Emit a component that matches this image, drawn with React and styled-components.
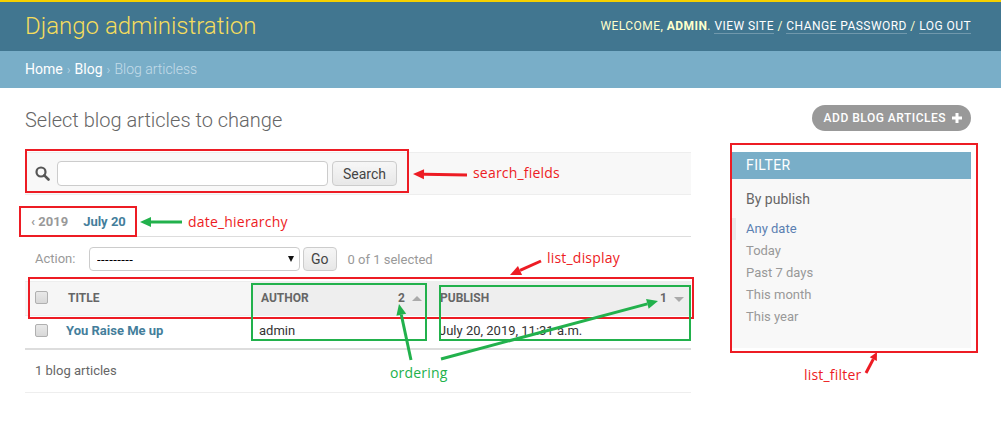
import React from "react";
import styled, { createGlobalStyle } from "styled-components";

const Global = createGlobalStyle`
  html, body { margin: 0; padding: 0; background: #fff; }
  body { font-family: Roboto, "Lucida Grande", Verdana, Arial, sans-serif; font-size: 14px; color: #333; width: 1001px; height: 427px; overflow: hidden; }
  * { box-sizing: border-box; }
`;

const Page = styled.div`position: relative; width: 1001px; height: 427px; overflow: hidden;`;

const Header = styled.header`
  height: 51px; background: #417690; border-top: 2px solid #f5d000;
  padding: 0 30px 0 25px; display: flex; align-items: center; justify-content: space-between; color: #ffc;
`;
const Brand = styled.h1`margin: 0; font-size: 24px; font-weight: 300; color: #f5dd5d; line-height: 1.2;`;
const Tools = styled.div`font-size: 12px; letter-spacing: 0.45px; text-transform: uppercase; font-weight: 400; margin-top: -1px;`;
const ToolLink = styled.a`color: #fff; border-bottom: 1px solid rgba(255,255,255,.25);`;

const Crumbs = styled.nav`
  height: 37px; background: #79aec8; padding: 0 25px 1px; display: flex; align-items: center; gap: 4px; font-size: 14px; font-weight: 300; color: #c4dce8;
`;
const CrumbLink = styled.a`color: #fff; font-weight: 400;`;
const CrumbSep = styled.span`font-size: 13px; color: #c4dce8;`;

const Content = styled.main`padding: 17px 30px 0 25px;`;
const TitleRow = styled.div`display: flex; justify-content: space-between; align-items: flex-start; height: 47px;`;
const Title = styled.h2`margin: 4px 0 0; font-size: 20px; font-weight: 300; color: #666; line-height: 22px;`;
const AddButton = styled.a`
  display: flex; align-items: center; gap: 5px; height: 26px; padding: 0 8px 0 12px; border-radius: 13px; background: #999; color: #fff;
  font-size: 12px; font-weight: 500; letter-spacing: .5px; text-transform: uppercase;
`;

const Columns = styled.div`display: flex; justify-content: space-between; align-items: flex-start;`;
const Changelist = styled.div`width: 666px;`;

const Toolbar = styled.div`
  height: 43px; background: #f8f8f8; border-top: 1px solid #eee; border-bottom: 1px solid #eee;
  padding: 0 0 0 10px; display: flex; align-items: center; gap: 7px;
`;
const SearchInput = styled.input`
  width: 271px; height: 25px; border: 1px solid #ccc; border-radius: 4px; background: #fff; padding: 2px 5px; margin: 0;
`;
const GreyButton = styled.button`
  height: ${p => p.$h}px; padding: 0 ${p => p.$px}px; border: 1px solid #ccc; border-radius: 4px; color: #444; margin: 0 0 0 ${p => p.$ml}px;
  background: linear-gradient(#f6f6f6, #eee); box-shadow: 0 -15px 20px -10px rgba(0,0,0,.04) inset;
  font: 400 14px Roboto, sans-serif;
`;
const DateBar = styled.div`
  height: 42px; border-bottom: 1px solid #ddd; padding: 12px 0 0 6px; display: flex; align-items: center; gap: 15px;
  font-size: 13px; font-weight: 700; color: #999;
`;
const DateBack = styled.span`font-weight: 700; color: #999;`;
const DateNow = styled.span`color: #447e9b;`;

const Actions = styled.div`
  height: 44px; padding: 0 0 0 10px; display: flex; align-items: center; color: #999; font-size: 13px; font-weight: 400;
`;
const ActionLabel = styled.span`width: 54px; margin-top: -1px;`;
const SelectWrap = styled.div`
  position: relative; width: 211px; height: 24px;
  &::after {
    content: ""; position: absolute; right: 6px; top: 9px; width: 0; height: 0;
    border-left: 3.5px solid transparent; border-right: 3.5px solid transparent; border-top: 6px solid #111;
  }
`;
const ActionSelect = styled.select`
  appearance: none; width: 100%; height: 100%; margin: 0; border: 1px solid #ccc; border-radius: 4px; background: #fff; color: #000;
  font: 400 13px Roboto, sans-serif; letter-spacing: .45px; padding: 0 7px;
`;
const Selected = styled.span`margin-left: 11px;`;

const Table = styled.table`width: 100%; border-collapse: collapse; table-layout: fixed; font-size: 13px;`;
const HeadCell = styled.th`
  width: ${p => p.$w}px; height: 34px; padding: 0 0 2px ${p => p.$pl}px; text-align: left; background: ${p => p.$sorted ? "#eee" : "#f6f6f6"};
  border-top: 1px solid #eee; border-bottom: 1px solid #eee; color: #666; font-size: 12px; font-weight: 700; text-transform: uppercase;
`;
const HeadInner = styled.div`display: flex; align-items: center; justify-content: space-between; padding-right: ${p => p.$pr}px;`;
const SortMark = styled.span`display: inline-flex; align-items: center; gap: 7px; font-size: 12px; color: #666;`;
const Tri = styled.i`
  width: 0; height: 0; border-left: 5px solid transparent; border-right: 5px solid transparent;
  ${p => p.$down ? "border-top: 5px solid #aaa; margin-top: 3px;" : "border-bottom: 5px solid #aaa; margin-top: 2px;"}
`;
const Cell = styled.td`height: 33px; padding: 0 0 2px ${p => p.$pl}px; color: #333; border-bottom: 2px solid #ddd; font-weight: ${p => p.$strong ? 700 : 400};`;
const RowLink = styled.a`color: #447e9b;`;
const Box = styled.input`display: block; width: 13px; height: 13px; margin: 0; appearance: none; border: 1px solid #b0b0b0; border-radius: 2px; background: linear-gradient(#e8e8e8,#d8d8d8);`;
const Pager = styled.div`height: 43px; border-bottom: 1px solid #eee; padding: 0 0 0 10px; display: flex; align-items: center; font-size: 13px; color: #666; font-weight: 400;`;

const Filter = styled.aside`width: 239px; height: 196px; background: #f8f8f8;`;
const FilterHead = styled.h2`margin: 0; height: 27px; background: #79aec8; color: #fff; font-size: 14px; font-weight: 400; padding: 0 14px; line-height: 27px; letter-spacing: .4px;`;
const FilterTitle = styled.h3`margin: 12px 0 11px; padding-left: 14px; font-size: 14px; font-weight: 400; color: #666; line-height: 16px; height: 16px;`;
const FilterList = styled.ul`list-style: none; margin: 0; padding: 0;`;
const FilterItem = styled.li`
  height: 22px; line-height: 22px; padding-left: ${p => p.$on ? 10 : 14}px; font-size: 13px; color: ${p => p.$on ? "#5b80b2" : "#999"};
  border-left: ${p => p.$on ? "4px solid #eaeaea" : "0"};
`;

const Frame = styled.div`
  position: absolute; left: ${p => p.$x}px; top: ${p => p.$y}px; width: ${p => p.$w}px; height: ${p => p.$h}px;
  border: 2px solid ${p => p.$c}; pointer-events: none;
`;
const Note = styled.span`
  position: absolute; left: ${p => p.$x}px; top: ${p => p.$y}px; color: ${p => p.$c}; font: 400 14px/18px "Open Sans", "Noto Sans", sans-serif; letter-spacing: .2px; white-space: nowrap;
`;
const Overlay = styled.svg`position: absolute; left: 0; top: 0; pointer-events: none;`;

const RED = "#ed1c24";
const GREEN = "#22b14c";

function Arrow({ x1, y1, x2, y2, c, w = 3, head = 11, hw = 5 }) {
  const a = Math.atan2(y2 - y1, x2 - x1);
  const bx = x2 - Math.cos(a) * head, by = y2 - Math.sin(a) * head;
  const nx = -Math.sin(a) * hw, ny = Math.cos(a) * hw;
  return (
    <g>
      <line x1={x1} y1={y1} x2={bx} y2={by} stroke={c} strokeWidth={w} />
      <polygon points={`${x2},${y2} ${bx + nx},${by + ny} ${bx - nx},${by - ny}`} fill={c} />
    </g>
  );
}

export default function App() {
  return (
    <Page>
      <Global />
      <Header>
        <Brand>Django administration</Brand>
        <Tools>
          Welcome, <strong>admin</strong>. <ToolLink>View site</ToolLink> / <ToolLink>Change password</ToolLink> / <ToolLink>Log out</ToolLink>
        </Tools>
      </Header>
      <Crumbs>
        <CrumbLink>Home</CrumbLink><CrumbSep>›</CrumbSep><CrumbLink>Blog</CrumbLink><CrumbSep>›</CrumbSep><span>Blog articless</span>
      </Crumbs>
      <Content>
        <TitleRow>
          <Title>Select blog articles to change</Title>
          <AddButton>
            Add blog articles
            <svg width="12" height="12" viewBox="0 0 12 12"><path d="M4.5 1h3v3.5H11v3H7.5V11h-3V7.5H1v-3h3.5z" fill="#fff" /></svg>
          </AddButton>
        </TitleRow>
        <Columns>
          <Changelist>
            <Toolbar>
              <svg width="15" height="15" viewBox="0 0 15 15"><circle cx="6" cy="6" r="4.5" fill="none" stroke="#555" strokeWidth="2.2" /><path d="M9.3 9.3l4.2 4.2" stroke="#555" strokeWidth="2.6" strokeLinecap="round" /></svg>
              <SearchInput type="text" />
              <GreyButton $h={25} $px={10} $ml={-3}>Search</GreyButton>
            </Toolbar>
            <DateBar>
              <DateBack>‹ 2019</DateBack>
              <DateNow>July 20</DateNow>
            </DateBar>
            <Actions>
              <ActionLabel>Action:</ActionLabel>
              <SelectWrap>
                <ActionSelect defaultValue="x"><option value="x">---------</option></ActionSelect>
              </SelectWrap>
              <GreyButton $h={24} $px={7} $ml={3}>Go</GreyButton>
              <Selected>0 of 1 selected</Selected>
            </Actions>
            <Table>
              <thead>
                <tr>
                  <HeadCell $w={33} $pl={10}><Box type="checkbox" /></HeadCell>
                  <HeadCell $w={193} $pl={10}>Title</HeadCell>
                  <HeadCell $w={179} $pl={10} $sorted>
                    <HeadInner $pr={8}>Author<SortMark>2<Tri /></SortMark></HeadInner>
                  </HeadCell>
                  <HeadCell $pl={10} $sorted>
                    <HeadInner $pr={7}>Publish<SortMark>1<Tri $down /></SortMark></HeadInner>
                  </HeadCell>
                </tr>
              </thead>
              <tbody>
                <tr>
                  <Cell $pl={10}><Box type="checkbox" /></Cell>
                  <Cell $pl={8} $strong><RowLink>You Raise Me up</RowLink></Cell>
                  <Cell $pl={8}>admin</Cell>
                  <Cell $pl={9}>July 20, 2019, 11:31 a.m.</Cell>
                </tr>
              </tbody>
            </Table>
            <Pager>1 blog articles</Pager>
          </Changelist>
          <Filter>
            <FilterHead>FILTER</FilterHead>
            <FilterTitle>By publish</FilterTitle>
            <FilterList>
              <FilterItem $on>Any date</FilterItem>
              <FilterItem>Today</FilterItem>
              <FilterItem>Past 7 days</FilterItem>
              <FilterItem>This month</FilterItem>
              <FilterItem>This year</FilterItem>
            </FilterList>
          </Filter>
        </Columns>
      </Content>

      <Frame $c={RED} $x={25} $y={149} $w={384} $h={44} />
      <Frame $c={RED} $x={19} $y={206} $w={118} $h={31} />
      <Frame $c={RED} $x={28} $y={277} $w={666} $h={42} />
      <Frame $c={GREEN} $x={251} $y={283} $w={176} $h={58} />
      <Frame $c={GREEN} $x={439} $y={285} $w={252} $h={56} />
      <Frame $c={RED} $x={730} $y={143} $w={248} $h={210} />
      <Overlay width="1001" height="427">
        <Arrow x1={467} y1={175} x2={413} y2={174} c={RED} />
        <Arrow x1={182} y1={222} x2={140} y2={222} c={GREEN} />
        <Arrow x1={541} y1={261} x2={510} y2={275} c={RED} />
        <Arrow x1={411} y1={360} x2={399} y2={304} c={GREEN} />
        <Arrow x1={441} y1={359} x2={658} y2={301} c={GREEN} />
        <Arrow x1={866} y1={373} x2={877} y2={352} c={RED} head={8} hw={4} />
      </Overlay>
      <Note $c={RED} $x={473} $y={164}>search_fields</Note>
      <Note $c={RED} $x={188} $y={213}>date_hierarchy</Note>
      <Note $c={RED} $x={547} $y={249}>list_display</Note>
      <Note $c={GREEN} $x={390} $y={364}>ordering</Note>
      <Note $c={RED} $x={804} $y={366}>list_filter</Note>
    </Page>
  );
}
